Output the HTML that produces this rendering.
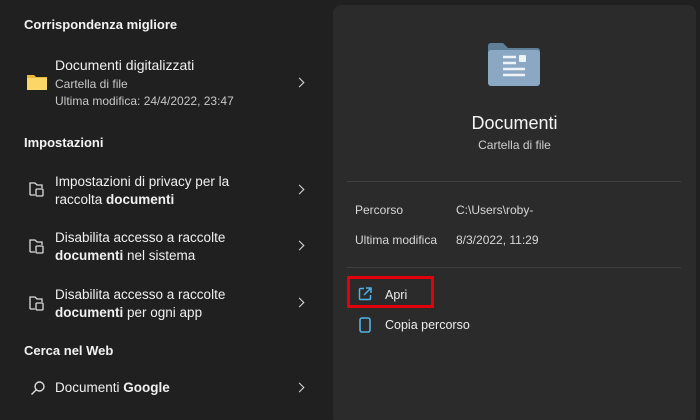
<!DOCTYPE html>
<html><head><meta charset="utf-8"><style>
*{margin:0;padding:0;box-sizing:border-box}
html,body{width:700px;height:420px;overflow:hidden}
body{background:#202020;font-family:"Liberation Sans",sans-serif;color:#fff;position:relative}
.a{position:absolute;white-space:nowrap}
.h{font-size:13px;font-weight:bold;color:#f2f2f2}
.t{font-size:13.5px;color:#f0f0f0}
.s{font-size:12px;color:#c8c8c8}
.chev{position:absolute;left:296px;width:7px;height:7px;border-right:1.6px solid #ddd;border-top:1.6px solid #ddd;transform:rotate(45deg)}
#panel{position:absolute;left:333px;top:5px;width:363px;height:420px;background:#2b2b2b;border-radius:8px}
.hr{position:absolute;left:347px;width:334px;height:1px;background:#3f3f3f}
</style></head><body>
<div class="a h" style="left:24px;top:17px">Corrispondenza migliore</div>
<svg class="a" style="left:27px;top:73px" width="21" height="17"><path d="M0 2h7l2 2h11v13H0z" fill="#e8b93a"/><path d="M0 5h20v12H0z" fill="#fcd667"/></svg>
<div class="a t" style="left:55px;top:57px;font-size:14px">Documenti digitalizzati</div>
<div class="a s" style="left:55px;top:77px">Cartella di file</div>
<div class="a s" style="left:55px;top:94px">Ultima modifica: 24/4/2022, 23:47</div>
<div class="chev" style="top:79px"></div>
<div class="a h" style="left:24px;top:135px">Impostazioni</div>

<svg class="a" style="left:29px;top:181px" width="16" height="16" fill="none" stroke="#ddd" stroke-width="1.3"><path d="M1 14V2h5l2 2h5v3M1 14h5"/><rect x="7" y="8" width="7" height="7" rx="1"/></svg>
<div class="a t" style="left:55px;top:174px">Impostazioni di privacy per la</div>
<div class="a t" style="left:55px;top:192px">raccolta <b>documenti</b></div>
<div class="chev" style="top:186px"></div>

<svg class="a" style="left:29px;top:238px" width="16" height="16" fill="none" stroke="#ddd" stroke-width="1.3"><path d="M1 14V2h5l2 2h5v3M1 14h5"/><rect x="7" y="8" width="7" height="7" rx="1"/></svg>
<div class="a t" style="left:55px;top:230px">Disabilita accesso a raccolte</div>
<div class="a t" style="left:55px;top:248px"><b>documenti</b> nel sistema</div>
<div class="chev" style="top:242px"></div>

<svg class="a" style="left:29px;top:295px" width="16" height="16" fill="none" stroke="#ddd" stroke-width="1.3"><path d="M1 14V2h5l2 2h5v3M1 14h5"/><rect x="7" y="8" width="7" height="7" rx="1"/></svg>
<div class="a t" style="left:55px;top:287px">Disabilita accesso a raccolte</div>
<div class="a t" style="left:55px;top:305px"><b>documenti</b> per ogni app</div>
<div class="chev" style="top:299px"></div>

<div class="a h" style="left:24px;top:343px">Cerca nel Web</div>
<svg class="a" style="left:30px;top:380px" width="16" height="16" fill="none" stroke="#ddd" stroke-width="1.4"><circle cx="9.5" cy="6.5" r="4.5"/><path d="M6.3 9.7L1.5 14.5"/></svg>
<div class="a t" style="left:55px;top:380px">Documenti <b>Google</b></div>
<div class="chev" style="top:384px"></div>

<div id="panel"></div>
<svg class="a" style="left:486px;top:42px" width="55" height="44"><path d="M2 4q0-3 3-3h12l5 5h29q3 0 3 3v31q0 3-3 3H5q-3 0-3-3z" fill="#5f7f98"/><rect x="2" y="8" width="52" height="36" rx="3" fill="#8aa7c3"/><path d="M17 21h13M17 27h22M17 33h22M17 15h13" stroke="#eef3f8" stroke-width="2.5"/><rect x="33" y="13" width="7" height="7" rx="1" fill="#eef3f8"/></svg>
<div class="a" style="left:333px;width:363px;text-align:center;top:113px;font-size:18px;color:#f5f5f5">Documenti</div>
<div class="a" style="left:333px;width:363px;text-align:center;top:138px;font-size:12px;color:#cfcfcf">Cartella di file</div>
<div class="hr" style="top:181px"></div>
<div class="a s" style="left:355px;top:203px;color:#d8d8d8">Percorso</div>
<div class="a s" style="left:456px;top:203px;color:#d8d8d8">C:\Users\roby-</div>
<div class="a s" style="left:355px;top:233px;color:#d8d8d8">Ultima modifica</div>
<div class="a s" style="left:456px;top:233px;color:#d8d8d8">8/3/2022, 11:29</div>
<div class="hr" style="top:267px"></div>
<div class="a" style="left:347px;top:276px;width:87px;height:32px;border:3px solid #e3000b"></div>
<svg class="a" style="left:358px;top:287px" width="14" height="14" fill="none" stroke="#4fb3e8" stroke-width="1.5"><path d="M6 1.5H2.5q-1 0-1 1v9q0 1 1 1h9q1 0 1-1V8"/><path d="M8 1h5v5M13 1L6 8"/></svg>
<div class="a" style="left:385px;top:288px;font-size:12.5px;color:#eee">Apri</div>
<svg class="a" style="left:359px;top:317px" width="12" height="16" fill="none" stroke="#4fb3e8" stroke-width="1.6"><rect x="1" y="1" width="10" height="14" rx="2"/></svg>
<div class="a" style="left:385px;top:318px;font-size:12.5px;color:#eee">Copia percorso</div>
</body></html>
